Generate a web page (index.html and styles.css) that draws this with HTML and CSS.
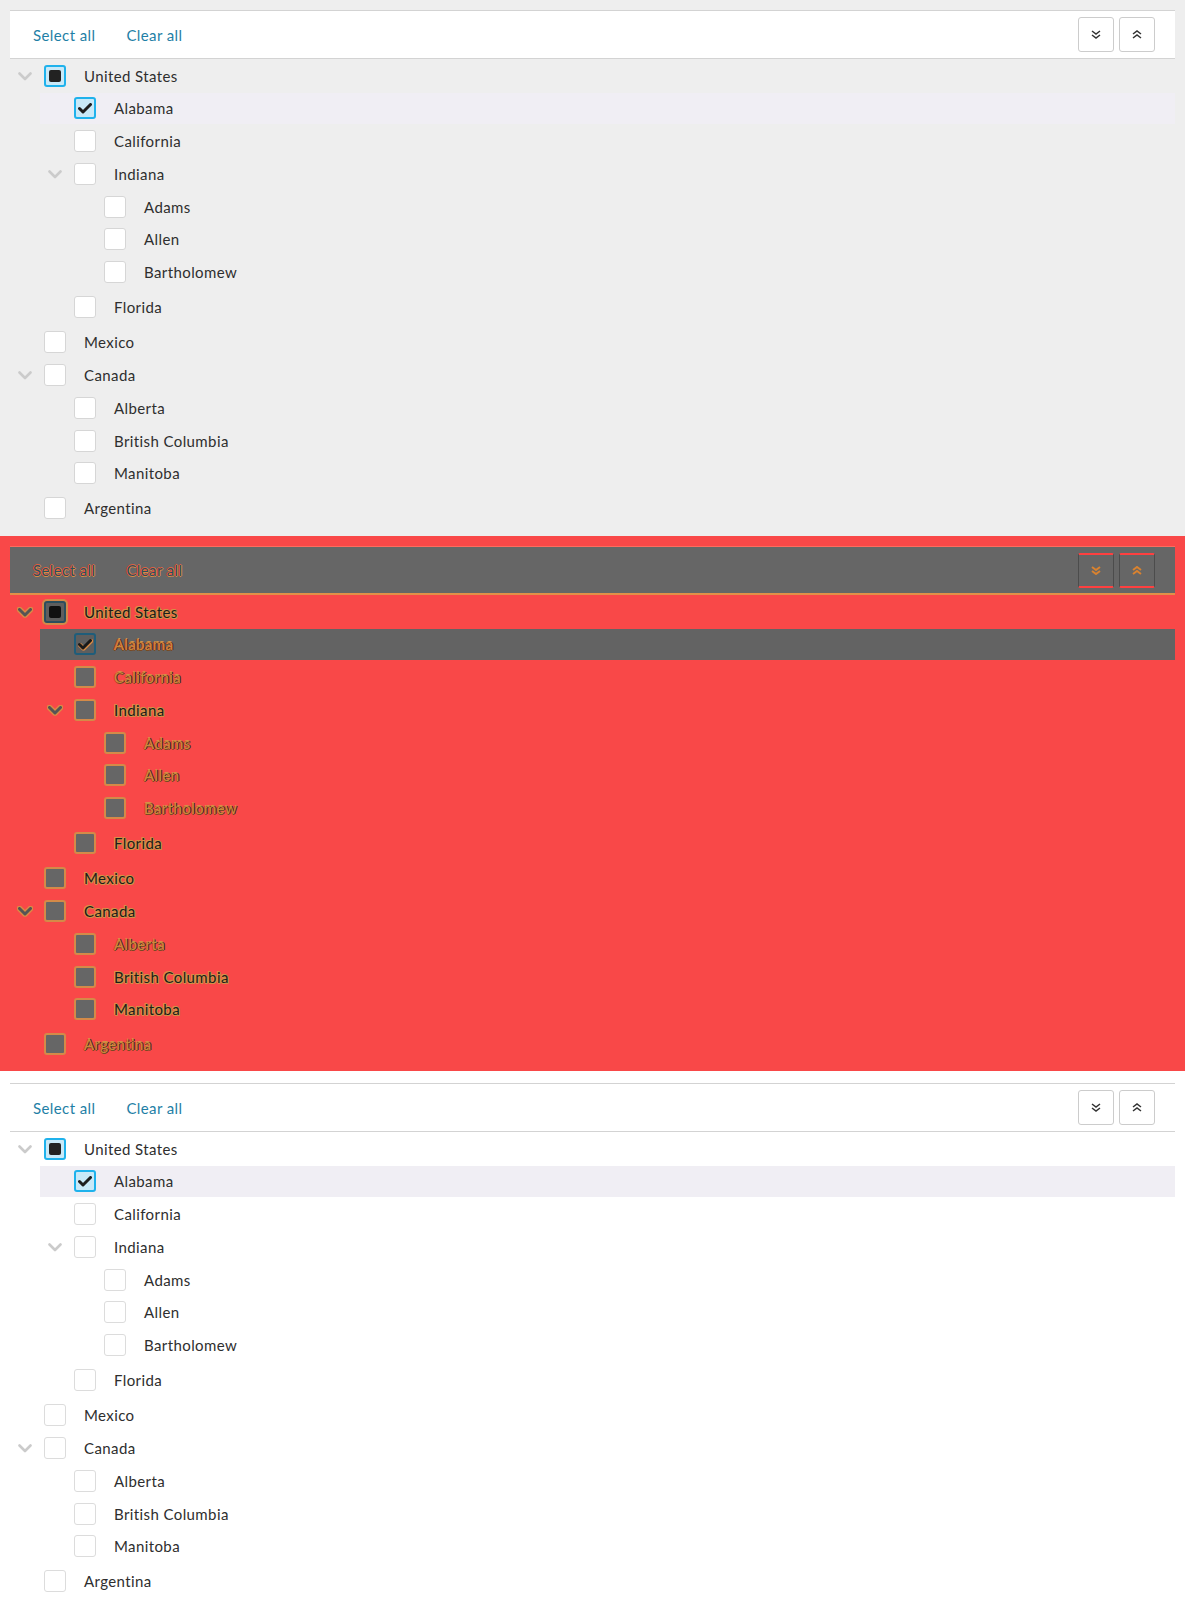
FILE: index.html
```html
<!DOCTYPE html>
<html lang="en">
<head>
<meta charset="utf-8">
<title>Tree select</title>
<link rel="stylesheet" href="styles.css">
</head>
<body>

<section class="panel panel-gray">
  <div class="toolbar">
    <div class="links"><a class="link">Select all</a><a class="link">Clear all</a></div>
    <div class="buttons">
      <button class="tb-btn" aria-label="Expand all"><svg width="10" height="9" viewBox="0 0 10 9"><polyline points="1,1 5,4 9,1" /><polyline points="1,5 5,8 9,5" /></svg></button>
      <button class="tb-btn" aria-label="Collapse all"><svg width="10" height="9" viewBox="0 0 10 9"><polyline points="1,4 5,1 9,4" /><polyline points="1,8 5,5 9,8" /></svg></button>
    </div>
  </div>
  <ul class="tree">
    <li><div class="row"><span class="twisty"><svg width="14" height="9" viewBox="0 0 14 9"><polyline points="1.5,1.5 7,7 12.5,1.5"/></svg></span><span class="cb cb-mixed"><span class="mixed-dot"></span></span><span class="label parent">United States</span></div>
      <ul class="children">
        <li><div class="row row-active"><span class="twisty"></span><span class="cb cb-checked"><svg width="14" height="11" viewBox="0 0 14 11"><polyline points="1.5,5.5 5,9 12.5,1.5"/></svg></span><span class="label leaf">Alabama</span></div></li>
        <li><div class="row"><span class="twisty"></span><span class="cb"></span><span class="label leaf">California</span></div></li>
        <li><div class="row"><span class="twisty"><svg width="14" height="9" viewBox="0 0 14 9"><polyline points="1.5,1.5 7,7 12.5,1.5"/></svg></span><span class="cb"></span><span class="label parent">Indiana</span></div>
          <ul class="children">
            <li><div class="row"><span class="twisty"></span><span class="cb"></span><span class="label leaf">Adams</span></div></li>
            <li><div class="row"><span class="twisty"></span><span class="cb"></span><span class="label leaf">Allen</span></div></li>
            <li><div class="row"><span class="twisty"></span><span class="cb"></span><span class="label leaf">Bartholomew</span></div></li>
          </ul>
        </li>
        <li><div class="row"><span class="twisty"></span><span class="cb"></span><span class="label parent">Florida</span></div></li>
      </ul>
    </li>
    <li><div class="row"><span class="twisty"></span><span class="cb"></span><span class="label parent">Mexico</span></div></li>
    <li><div class="row"><span class="twisty"><svg width="14" height="9" viewBox="0 0 14 9"><polyline points="1.5,1.5 7,7 12.5,1.5"/></svg></span><span class="cb"></span><span class="label parent">Canada</span></div>
      <ul class="children">
        <li><div class="row"><span class="twisty"></span><span class="cb"></span><span class="label leaf">Alberta</span></div></li>
        <li><div class="row"><span class="twisty"></span><span class="cb"></span><span class="label parent">British Columbia</span></div></li>
        <li><div class="row"><span class="twisty"></span><span class="cb"></span><span class="label parent">Manitoba</span></div></li>
      </ul>
    </li>
    <li><div class="row"><span class="twisty"></span><span class="cb"></span><span class="label leaf">Argentina</span></div></li>
  </ul>
</section>

<section class="panel panel-red">
  <div class="toolbar">
    <div class="links"><a class="link">Select all</a><a class="link">Clear all</a></div>
    <div class="buttons">
      <button class="tb-btn" aria-label="Expand all"><svg width="10" height="9" viewBox="0 0 10 9"><polyline points="1,1 5,4 9,1" /><polyline points="1,5 5,8 9,5" /></svg></button>
      <button class="tb-btn" aria-label="Collapse all"><svg width="10" height="9" viewBox="0 0 10 9"><polyline points="1,4 5,1 9,4" /><polyline points="1,8 5,5 9,8" /></svg></button>
    </div>
  </div>
  <ul class="tree">
    <li><div class="row"><span class="twisty"><svg width="14" height="9" viewBox="0 0 14 9"><polyline points="1.5,1.5 7,7 12.5,1.5"/></svg></span><span class="cb cb-mixed"><span class="mixed-dot"></span></span><span class="label parent">United States</span></div>
      <ul class="children">
        <li><div class="row row-active"><span class="twisty"></span><span class="cb cb-checked"><svg width="14" height="11" viewBox="0 0 14 11"><polyline points="1.5,5.5 5,9 12.5,1.5"/></svg></span><span class="label leaf">Alabama</span></div></li>
        <li><div class="row"><span class="twisty"></span><span class="cb"></span><span class="label leaf">California</span></div></li>
        <li><div class="row"><span class="twisty"><svg width="14" height="9" viewBox="0 0 14 9"><polyline points="1.5,1.5 7,7 12.5,1.5"/></svg></span><span class="cb"></span><span class="label parent">Indiana</span></div>
          <ul class="children">
            <li><div class="row"><span class="twisty"></span><span class="cb"></span><span class="label leaf">Adams</span></div></li>
            <li><div class="row"><span class="twisty"></span><span class="cb"></span><span class="label leaf">Allen</span></div></li>
            <li><div class="row"><span class="twisty"></span><span class="cb"></span><span class="label leaf">Bartholomew</span></div></li>
          </ul>
        </li>
        <li><div class="row"><span class="twisty"></span><span class="cb"></span><span class="label parent">Florida</span></div></li>
      </ul>
    </li>
    <li><div class="row"><span class="twisty"></span><span class="cb"></span><span class="label parent">Mexico</span></div></li>
    <li><div class="row"><span class="twisty"><svg width="14" height="9" viewBox="0 0 14 9"><polyline points="1.5,1.5 7,7 12.5,1.5"/></svg></span><span class="cb"></span><span class="label parent">Canada</span></div>
      <ul class="children">
        <li><div class="row"><span class="twisty"></span><span class="cb"></span><span class="label leaf">Alberta</span></div></li>
        <li><div class="row"><span class="twisty"></span><span class="cb"></span><span class="label parent">British Columbia</span></div></li>
        <li><div class="row"><span class="twisty"></span><span class="cb"></span><span class="label parent">Manitoba</span></div></li>
      </ul>
    </li>
    <li><div class="row"><span class="twisty"></span><span class="cb"></span><span class="label leaf">Argentina</span></div></li>
  </ul>
</section>

<section class="panel panel-white">
  <div class="toolbar">
    <div class="links"><a class="link">Select all</a><a class="link">Clear all</a></div>
    <div class="buttons">
      <button class="tb-btn" aria-label="Expand all"><svg width="10" height="9" viewBox="0 0 10 9"><polyline points="1,1 5,4 9,1" /><polyline points="1,5 5,8 9,5" /></svg></button>
      <button class="tb-btn" aria-label="Collapse all"><svg width="10" height="9" viewBox="0 0 10 9"><polyline points="1,4 5,1 9,4" /><polyline points="1,8 5,5 9,8" /></svg></button>
    </div>
  </div>
  <ul class="tree">
    <li><div class="row"><span class="twisty"><svg width="14" height="9" viewBox="0 0 14 9"><polyline points="1.5,1.5 7,7 12.5,1.5"/></svg></span><span class="cb cb-mixed"><span class="mixed-dot"></span></span><span class="label parent">United States</span></div>
      <ul class="children">
        <li><div class="row row-active"><span class="twisty"></span><span class="cb cb-checked"><svg width="14" height="11" viewBox="0 0 14 11"><polyline points="1.5,5.5 5,9 12.5,1.5"/></svg></span><span class="label leaf">Alabama</span></div></li>
        <li><div class="row"><span class="twisty"></span><span class="cb"></span><span class="label leaf">California</span></div></li>
        <li><div class="row"><span class="twisty"><svg width="14" height="9" viewBox="0 0 14 9"><polyline points="1.5,1.5 7,7 12.5,1.5"/></svg></span><span class="cb"></span><span class="label parent">Indiana</span></div>
          <ul class="children">
            <li><div class="row"><span class="twisty"></span><span class="cb"></span><span class="label leaf">Adams</span></div></li>
            <li><div class="row"><span class="twisty"></span><span class="cb"></span><span class="label leaf">Allen</span></div></li>
            <li><div class="row"><span class="twisty"></span><span class="cb"></span><span class="label leaf">Bartholomew</span></div></li>
          </ul>
        </li>
        <li><div class="row"><span class="twisty"></span><span class="cb"></span><span class="label parent">Florida</span></div></li>
      </ul>
    </li>
    <li><div class="row"><span class="twisty"></span><span class="cb"></span><span class="label parent">Mexico</span></div></li>
    <li><div class="row"><span class="twisty"><svg width="14" height="9" viewBox="0 0 14 9"><polyline points="1.5,1.5 7,7 12.5,1.5"/></svg></span><span class="cb"></span><span class="label parent">Canada</span></div>
      <ul class="children">
        <li><div class="row"><span class="twisty"></span><span class="cb"></span><span class="label leaf">Alberta</span></div></li>
        <li><div class="row"><span class="twisty"></span><span class="cb"></span><span class="label parent">British Columbia</span></div></li>
        <li><div class="row"><span class="twisty"></span><span class="cb"></span><span class="label parent">Manitoba</span></div></li>
      </ul>
    </li>
    <li><div class="row"><span class="twisty"></span><span class="cb"></span><span class="label leaf">Argentina</span></div></li>
  </ul>
</section>

</body>
</html>
```

FILE: styles.css
```css
* { box-sizing: border-box; }

html, body {
  margin: 0;
  padding: 0;
}

body {
  font-family: Lato, "Open Sans", "Liberation Sans", sans-serif;
  font-size: 15px;
  letter-spacing: 0.4px;
  color: #2b2b2b;
  background: #fff;
}

.panel {
  padding: 10px;
}

.panel-gray { background: #eeeeee; height: 536px; }
.panel-red { background: #f94848; height: 535px; }
.panel-white { background: #ffffff; padding-top: 12px; }

/* toolbar */
.toolbar {
  display: flex;
  align-items: center;
  justify-content: space-between;
  height: 49px;
  padding: 0 20px 0 23px;
  border-top: 1px solid #d3d3d3;
  border-bottom: 1px solid #d3d3d3;
}

.panel-gray .toolbar { background: #ffffff; }

.links {
  display: flex;
  gap: 31px;
}

.link {
  color: #1f7fa6;
  font-size: 15px;
  cursor: pointer;
  line-height: 20px;
}

.buttons {
  display: flex;
  gap: 5px;
}

.tb-btn {
  width: 36px;
  height: 35px;
  padding: 0;
  display: flex;
  align-items: center;
  justify-content: center;
  background: #ffffff;
  border: 1px solid #cccccc;
  border-radius: 3px;
}

.tb-btn svg polyline {
  fill: none;
  stroke: #333333;
  stroke-width: 1.5;
}

/* tree */
.tree, .children {
  list-style: none;
  margin: 0;
  padding: 0;
}

.tree { padding-top: 1px; }

.children {
  padding-left: 30px;
  padding-bottom: 2.2px;
}

.row {
  display: flex;
  align-items: center;
  height: 31px;
  margin-bottom: 1.8px;
}

.row-active { background: #f0eef4; }

.twisty {
  width: 30px;
  height: 31px;
  display: flex;
  align-items: center;
  justify-content: center;
  flex: none;
}

.twisty svg { margin-top: 1px; }

.twisty svg polyline {
  fill: none;
  stroke: #cbcbcb;
  stroke-width: 2.6;
  stroke-linecap: round;
  stroke-linejoin: round;
}

.cb {
  width: 22px;
  height: 22px;
  flex: none;
  margin-left: 4px;
  margin-right: 18px;
  background: #ffffff;
  border: 1px solid #d6d6d6;
  border-radius: 3px;
  display: flex;
  align-items: center;
  justify-content: center;
}

.panel-white .cb { border-color: #dcdcdc; }

.cb.cb-mixed, .cb.cb-checked,
.panel-white .cb.cb-mixed, .panel-white .cb.cb-checked {
  border: 2px solid #1fb2ec;
  background: #c9e9f8;
}

.mixed-dot {
  width: 12px;
  height: 12px;
  border-radius: 2px;
  background: #222222;
}

.cb svg polyline {
  fill: none;
  stroke: #1e1e1e;
  stroke-width: 3;
  stroke-linecap: round;
  stroke-linejoin: round;
}

.label {
  color: #2e2e2e;
  white-space: nowrap;
  line-height: 20px;
}

/* red "contrast" theme */
.panel-red .toolbar {
  background: #666666;
  border-top: 1px solid #ff6b5e;
  border-bottom: 2px solid #e29048;
}

.panel-red .link {
  color: #2d4f5c;
  text-shadow: -1px 0 #f04a3c, 1px 0 #d98b45, 0 1px #d98b45, 0 -1px #e2603e;
}

.panel-red .tb-btn {
  background: transparent;
  border-width: 2px 1px;
  border-style: solid;
  border-color: #ff4040 #4c4c4c #ff4040 #4c4c4c;
  border-radius: 2px;
}

.panel-red .tb-btn svg polyline {
  stroke: #d9822f;
  stroke-width: 2;
}

.panel-red .row-active { background: #636363; }

.panel-red .twisty svg polyline {
  stroke: #555555;
  stroke-width: 3;
}

.panel-red .twisty svg {
  filter: drop-shadow(1px 0 0 #d98b45) drop-shadow(-1px 0 0 #d98b45) drop-shadow(0 1px 0 #d98b45) drop-shadow(0 -1px 0 #d98b45);
}

.panel-red .cb {
  background: #666666;
  border: 2px solid #d48a48;
}

.panel-red .cb.cb-mixed {
  border: 2px solid #2b4e5e;
  background: #5e5e5e;
  box-shadow: 0 0 0 2px #d48a48;
}

.panel-red .cb.cb-checked {
  border: 2px solid #1f5d7a;
  background: #5e5e5e;
}

.panel-red .cb svg polyline {
  stroke: #1a1a1a;
}

.panel-red .cb-checked svg {
  filter: drop-shadow(1px 0 0 #d98b45) drop-shadow(0 1px 0 #d98b45);
}

.panel-red .mixed-dot { background: #111111; }

.panel-red .label.parent {
  color: #1c1c1c;
  text-shadow: 1px 0 #d49146, -1px 0 #d49146, 0 1px #d49146, 0 -1px #d49146, 1px 1px #d49146, -1px -1px #d49146;
}

.panel-red .label.leaf {
  color: #c98a3c;
  text-shadow: 1px 0 #3a2a20, -1px 0 #d03a30, 0 1px #7a4a22, 0 -1px #d49146;
}
```
